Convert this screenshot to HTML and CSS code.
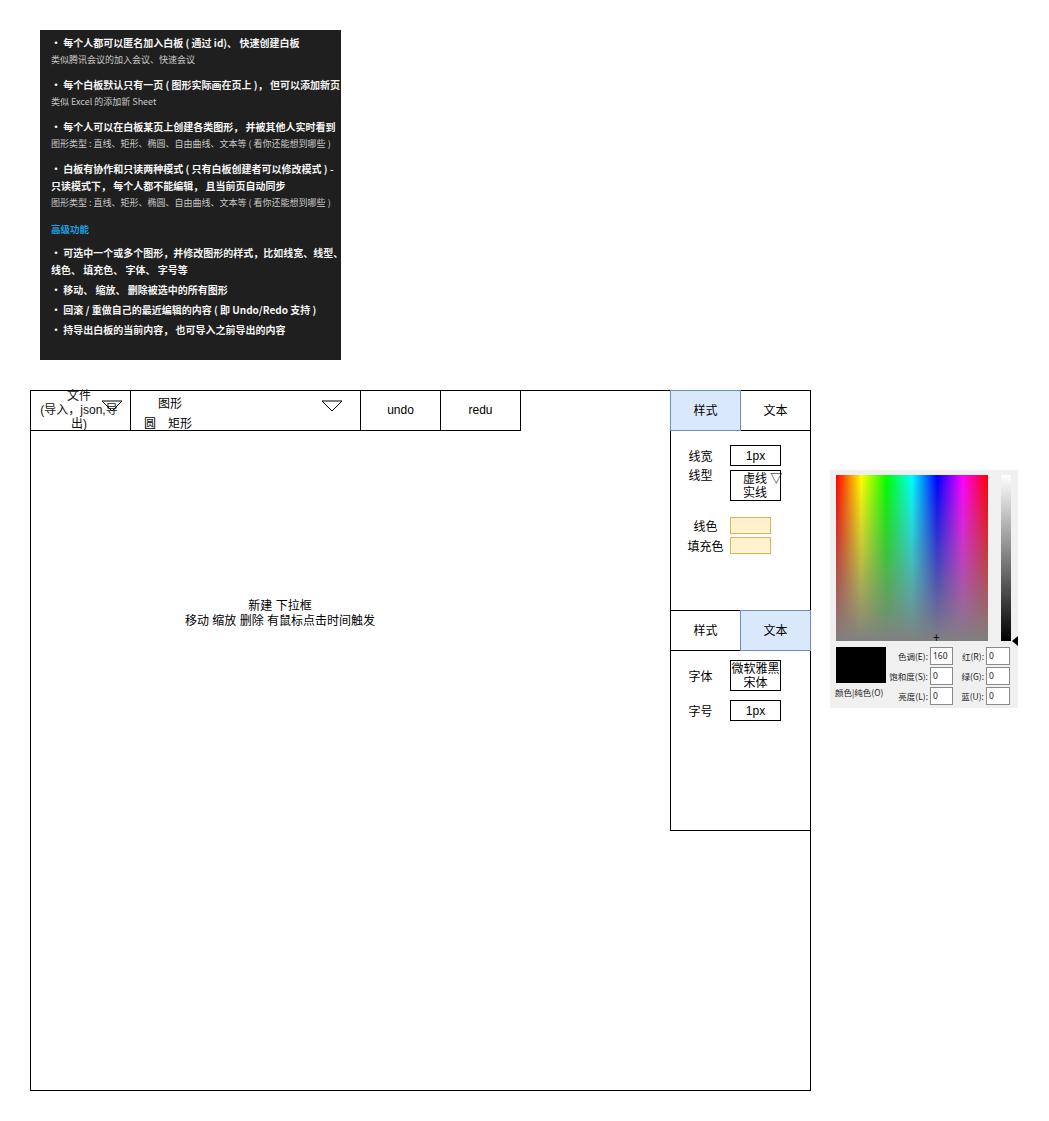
FILE: index.html
```html
<!DOCTYPE html>
<html lang="zh">
<head>
<meta charset="utf-8">
<title>白板</title>
<link rel="stylesheet" href="styles.css">
</head>
<body>
<div class="board">

  <div class="notes">
    <p class="pt">· 每个人都可以匿名加入白板 ( 通过 id)、 快速创建白板</p>
    <p class="sub">类似腾讯会议的加入会议、快速会议</p>
    <p class="pt gap">· 每个白板默认只有一页 ( 图形实际画在页上 )， 但可以添加新页</p>
    <p class="sub">类似 Excel 的添加新 Sheet</p>
    <p class="pt gap">· 每个人可以在白板某页上创建各类图形， 并被其他人实时看到</p>
    <p class="sub">图形类型 : 直线、矩形、椭圆、自由曲线、文本等 ( 看你还能想到哪些 )</p>
    <p class="pt gap">· 白板有协作和只读两种模式 ( 只有白板创建者可以修改模式 ) -</p>
    <p class="pt">只读模式下， 每个人都不能编辑， 且当前页自动同步</p>
    <p class="sub">图形类型 : 直线、矩形、椭圆、自由曲线、文本等 ( 看你还能想到哪些 )</p>
    <p class="head">高级功能</p>
    <p class="pt g6">· 可选中一个或多个图形，并修改图形的样式，比如线宽、线型、</p>
    <p class="pt">线色、 填充色、 字体、 字号等</p>
    <p class="pt g3">· 移动、 缩放、 删除被选中的所有图形</p>
    <p class="pt g3">· 回滚 / 重做自己的最近编辑的内容 ( 即 Undo/Redo 支持 )</p>
    <p class="pt g3">· 持导出白板的当前内容， 也可导入之前导出的内容</p>
  </div>

  <div class="canvas"></div>

  <div class="toolbar">
    <div class="cell c-file">
      <div class="file-text">文件<br>(导入，json,导<br>出)</div>
      <svg class="tri tri-file" width="22" height="12" viewBox="0 0 22 12"><path d="M1 1 L21 1 L11 11 Z" fill="none" stroke="#000" stroke-width="1"/></svg>
    </div>
    <div class="cell c-shape">
      <div class="shape-l1">图形</div>
      <div class="shape-l2">圆　矩形</div>
      <svg class="tri tri-shape" width="22" height="12" viewBox="0 0 22 12"><path d="M1 1 L21 1 L11 11 Z" fill="none" stroke="#000" stroke-width="1"/></svg>
    </div>
    <div class="cell c-btn">undo</div>
    <div class="cell c-btn">redu</div>
  </div>

  <div class="center-text">新建 下拉框<br>移动 缩放 删除 有鼠标点击时间触发</div>

  <div class="panel">
    <div class="tabs">
      <div class="tab active">样式</div>
      <div class="tab">文本</div>
    </div>
    <div class="style-body">
      <div class="row r-width"><span class="lbl">线宽</span><span class="field f-w">1px</span></div>
      <div class="row r-type"><span class="lbl">线型</span><span class="field f-type"><span>虚线 ▽</span><span>实线</span></span></div>
      <div class="row r-line"><span class="lbl lbl-c">线色</span><span class="swatch"></span></div>
      <div class="row r-fill"><span class="lbl lbl-c">填充色</span><span class="swatch"></span></div>
    </div>
    <div class="tabs tabs2">
      <div class="tab">样式</div>
      <div class="tab active">文本</div>
    </div>
    <div class="text-body">
      <div class="row r-font"><span class="lbl">字体</span><span class="field f-font"><span>微软雅黑</span><span>宋体</span></span></div>
      <div class="row r-size"><span class="lbl">字号</span><span class="field f-w">1px</span></div>
    </div>
  </div>

  <div class="picker">
    <div class="pk-top">
      <div class="spectrum"><span class="cross">+</span></div>
      <div class="lum"></div>
      <div class="lum-arrow"></div>
    </div>
    <div class="pk-bottom">
      <div class="pk-swatch-col">
        <div class="pk-swatch"></div>
        <div class="pk-cap">颜色|纯色(O)</div>
      </div>
      <div class="pk-fields">
        <span class="pl">色调(E):</span><span class="pin">160</span>
        <span class="pl pl2">红(R):</span><span class="pin">0</span>
        <span class="pl">饱和度(S):</span><span class="pin">0</span>
        <span class="pl pl2">绿(G):</span><span class="pin">0</span>
        <span class="pl">亮度(L):</span><span class="pin">0</span>
        <span class="pl pl2">蓝(U):</span><span class="pin">0</span>
      </div>
    </div>
  </div>

</div>
</body>
</html>
```

FILE: styles.css
```css
* { box-sizing: border-box; }
html, body { margin: 0; padding: 0; background: #fff; }
body {
  font-family: "Liberation Sans", "Noto Sans CJK SC", sans-serif;
  font-size: 12px;
  color: #000;
}
.board { position: relative; width: 1049px; height: 1121px; overflow: hidden; }

/* dark notes card */
.notes {
  position: absolute; left: 40px; top: 30px;
  width: 301px; height: 330px;
  background: #1f1f1f;
  padding: 4px 0 0 11px;
  font-family: "Noto Sans CJK SC", "Noto Sans", sans-serif;
}
.notes p { margin: 0; line-height: 17px; white-space: nowrap; }
.notes .pt { font-size: 10px; font-weight: 700; color: #f4f4f4; }
.notes .sub { font-size: 9px; color: #c8c8c8; }
.notes .gap { margin-top: 8px; }
.notes .head { font-size: 9.5px; font-weight: 700; color: #1ba1e2; margin-top: 10px; }
.notes .g6 { margin-top: 6px; }
.notes .g3 { margin-top: 3px; }

/* canvas frame */
.canvas {
  position: absolute; left: 30px; top: 390px;
  width: 781px; height: 701px;
  border: 1px solid #000;
}

/* toolbar */
.toolbar { position: absolute; left: 30px; top: 390px; display: flex; height: 41px; }
.cell { position: relative; height: 41px; border: 1px solid #000; background: #fff; margin-left: -1px; }
.cell:first-child { margin-left: 0; }
.c-file { width: 101px; display: flex; align-items: center; justify-content: center; }
.file-text { text-align: center; line-height: 14px; color: #111; margin-left: -3px; margin-top: -1px; }
.c-shape { width: 231px; padding-top: 3px; }
.shape-l1 { line-height: 20px; padding-left: 27px; }
.shape-l2 { line-height: 20px; padding-left: 13px; }
.c-btn { width: 81px; display: flex; align-items: center; justify-content: center; padding-bottom: 1px; }
.tri { position: absolute; display: block; }
.tri-file { left: 70px; top: 9px; }
.tri-shape { left: 190px; top: 9px; }

.center-text {
  position: absolute; left: 130px; top: 599px; width: 300px;
  text-align: center; line-height: 15px;
}

/* side panel */
.panel {
  position: absolute; left: 670px; top: 390px;
  width: 141px; height: 441px;
  border: 1px solid #000; background: #fff;
  display: flex; flex-direction: column;
}
.tabs { display: flex; height: 41px; margin: -1px -1px 0 -1px; }
.tab {
  width: 71px; height: 41px; border: 1px solid #000; background: #fff;
  display: flex; align-items: center; justify-content: center; padding-bottom: 2px;
}
.tab + .tab { margin-left: -1px; }
.tab.active { background: #dae8fc; border-color: #6c8ebf; position: relative; z-index: 1; }
.style-body { height: 180px; padding-top: 14px; }
.text-body { padding-top: 9px; }
.row { display: flex; align-items: center; }
.lbl { width: 59px; text-align: center; }
.lbl-c { padding-left: 10px; }
.field {
  width: 51px; border: 1px solid #000; background: #fff;
  display: flex; flex-direction: column; align-items: center; justify-content: center;
  line-height: 14px;
}
.f-w { height: 21px; }
.r-width .lbl { margin-top: -1px; }
.r-type { margin-top: 4px; align-items: flex-start; }
.r-type .lbl { line-height: 12px; }
.f-type { height: 31px; align-items: flex-start; padding-left: 12px; white-space: nowrap; }
.r-line { margin-top: 16px; }
.r-fill { margin-top: 3px; }
.swatch { width: 41px; height: 17px; background: #fff2cc; border: 1px solid #d6b656; }
.f-font { height: 31px; line-height: 14px; }
.r-size { margin-top: 9px; }

/* color picker */
.picker {
  position: absolute; left: 830px; top: 470px;
  width: 188px; height: 238px;
  background: #f0f0f0;
  padding: 5px 0 0 6px;
  font-family: "Noto Sans CJK SC", sans-serif;
  font-size: 8.5px; color: #222;
}
.pk-top { display: flex; height: 166px; position: relative; }
.spectrum {
  position: relative; width: 152px; height: 166px;
  background:
    linear-gradient(to bottom, rgba(128,128,128,0), #808080),
    linear-gradient(to right, #f00, #ff0 16.6%, #0f0 33.3%, #0ff 50%, #00f 66.6%, #f0f 83.3%, #f00);
}
.cross { position: absolute; left: 97px; top: 156px; font-size: 12px; line-height: 12px; color: #000; }
.lum {
  margin-left: 13px; width: 10px; height: 166px;
  background: linear-gradient(to bottom, #fff, #000);
}
.lum-arrow {
  position: absolute; left: 176px; top: 161px;
  width: 0; height: 0;
  border-top: 5px solid transparent; border-bottom: 5px solid transparent;
  border-right: 6px solid #000;
}
.pk-bottom { display: flex; margin-top: 6px; }
.pk-swatch-col { width: 53px; }
.pk-swatch { width: 50px; height: 36px; background: #000; }
.pk-cap { margin-top: 3px; margin-left: -1px; white-space: nowrap; line-height: 12px; }
.pk-fields {
  display: grid;
  grid-template-columns: 41px 23px 33px 24px;
  grid-auto-rows: 18px; row-gap: 2px;
}
.pl { text-align: right; align-self: center; white-space: nowrap; padding-right: 2px; }
.pin {
  background: #fff; border: 1px solid #8a8a8a;
  padding-left: 2px; line-height: 15px; font-family: "Noto Sans", sans-serif; font-size: 8.5px;
}
```
